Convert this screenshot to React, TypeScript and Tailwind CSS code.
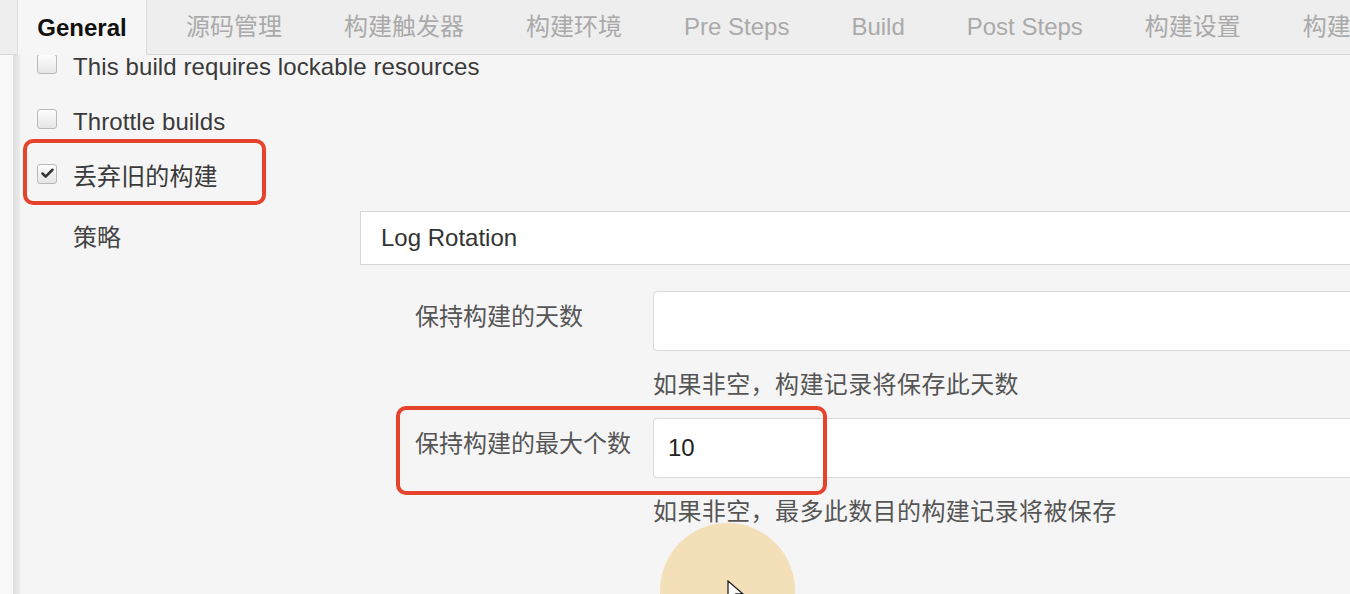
import { Check } from "lucide-react";

const tabs = ["源码管理", "构建触发器", "构建环境", "Pre Steps", "Build", "Post Steps", "构建设置", "构建后操作"];

const font = "font-['Liberation_Sans','Noto_Sans_CJK_SC',sans-serif]";

function Checkbox({ checked }: { checked?: boolean }) {
  return (
    <span className="w-[20px] h-[20px] shrink-0 rounded-[3px] border border-[#b9b9b9] bg-gradient-to-b from-[#fdfdfd] to-[#e6e6e6] flex items-center justify-center">
      {checked && <Check size={15} strokeWidth={4} className="text-[#333]" />}
    </span>
  );
}

function CheckRow({ label, checked }: { label: string; checked?: boolean }) {
  return (
    <div className="h-[55px] flex items-center gap-[16px]">
      <Checkbox checked={checked} />
      <span className="text-[24px] text-[#3a3a3a] leading-none pt-[7px] tracking-[0.1px]">{label}</span>
    </div>
  );
}

function Field({ label, value, help }: { label: string; value?: string; help: string }) {
  return (
    <div className="flex flex-col">
      <div className="flex items-start">
        <div className="w-[238px] shrink-0 pt-[11px] text-[24px] text-[#555] leading-[30px]">{label}</div>
        <div className="w-[760px] h-[60px] bg-white border border-[#d9d9d9] rounded-[4px] flex items-center px-[14px] text-[24px] text-[#222]">
          {value}
        </div>
      </div>
      <div className="ml-[238px] h-[67px] flex items-center text-[24px] text-[#555] tracking-[0.4px]">{help}</div>
    </div>
  );
}

export default function App() {
  return (
    <div className={`relative w-[1350px] h-[594px] overflow-hidden bg-[#f5f5f5] ${font}`}>
      {/* Tab bar */}
      <div className="relative z-10 flex h-[55px] bg-[#eeeeee] border-b border-[#d8d8d8]">
        <div className="w-[17px] shrink-0" />
        <div className="w-[130px] h-[55px] shrink-0 bg-[#f6f6f6] border-x border-[#dedede] flex items-center justify-center text-[24px] font-bold text-[#111]">
          General
        </div>
        <div className="flex ml-[8px] whitespace-nowrap">
          {tabs.map((t) => (
            <div key={t} className="px-[31px] h-[54px] flex items-center text-[24px] text-[#aaaaaa]">
              {t}
            </div>
          ))}
        </div>
      </div>

      {/* Body */}
      <div className="flex h-[539px] overflow-hidden">
        <div className="w-[13px] shrink-0 bg-[#f9f9f9]" />
        <div className="w-[7px] shrink-0 bg-gradient-to-r from-[#dedede] to-[#ececec]" />
        <div className="flex-1 pl-[17px] -mt-[19px]">
          <CheckRow label="This build requires lockable resources" />
          <CheckRow label="Throttle builds" />
          <CheckRow label="丢弃旧的构建" checked />

          <div className="ml-[36px] mt-[10px] flex items-center">
            <div className="w-[287px] shrink-0 text-[24px] text-[#444]">策略</div>
            <div className="w-[1000px] h-[54px] bg-white border border-[#d6d6d6] flex items-center px-[20px] text-[24px] text-[#333]">
              Log Rotation
            </div>
          </div>

          <div className="ml-[378px] mt-[26px]">
            <Field label="保持构建的天数" help="如果非空，构建记录将保存此天数" />
            <Field label="保持构建的最大个数" value="10" help="如果非空，最多此数目的构建记录将被保存" />
          </div>
        </div>
      </div>

      {/* Annotations */}
      <div className="absolute left-[23px] top-[139px] w-[243px] h-[66px] border-[4px] border-[#e6432d] rounded-[10px]" />
      <div className="absolute left-[396px] top-[406px] w-[431px] h-[89px] border-[4px] border-[#e6432d] rounded-[10px]" />

      {/* Cursor highlight */}
      <div className="absolute left-[660px] top-[523px] w-[135px] h-[135px] rounded-full bg-[#f3dfb8]" />
      <svg className="absolute left-[727px] top-[580px]" width="20" height="26" viewBox="0 0 20 26">
        <path d="M1 1 L1 20 L6 15 L10 24 L13 23 L9 14 L16 14 Z" fill="#fff" stroke="#222" strokeWidth="1.3" />
      </svg>
    </div>
  );
}
